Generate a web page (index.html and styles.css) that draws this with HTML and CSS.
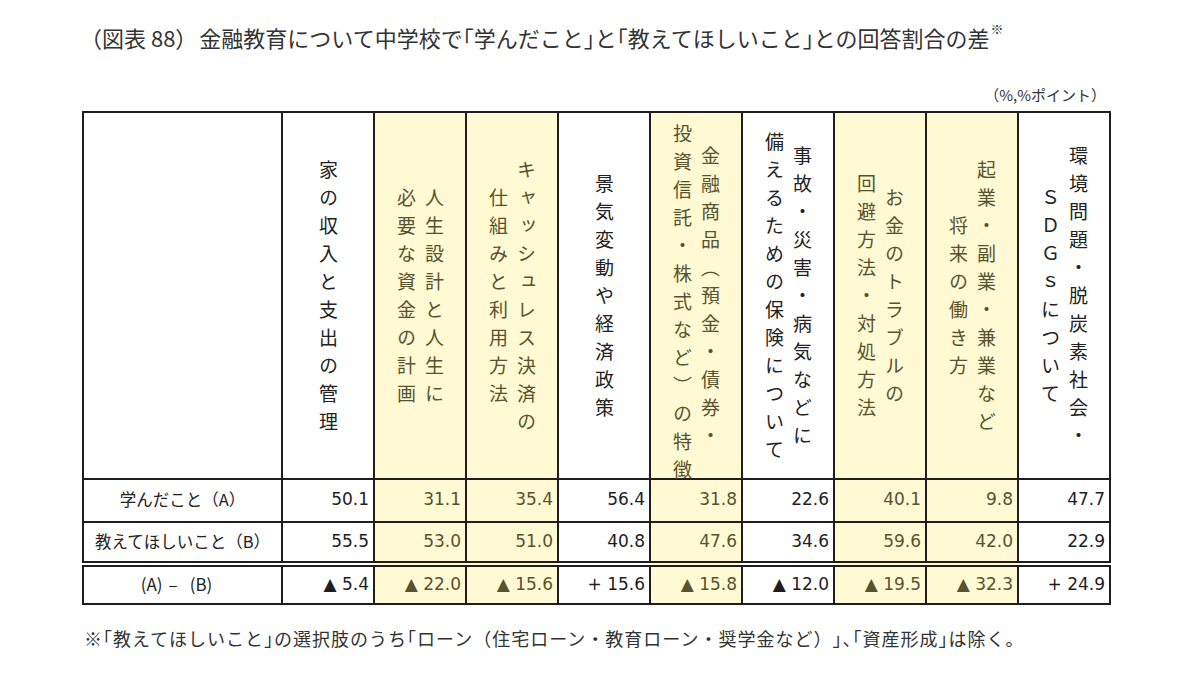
FILE: index.html
```
<!DOCTYPE html>
<html lang="ja">
<head>
<meta charset="utf-8">
<title>図表88</title>
<link rel="stylesheet" href="styles.css">
</head>
<body>
<div class="page">
  <h1 class="title"><span class="fig-no">（図表 88）</span>金融教育について中学校で<span class="hw">「</span>学んだこと<span class="hw">」</span>と<span class="hw">「</span>教えてほしいこと<span class="hw">」</span>との回答割合の差<sup>※</sup></h1>
  <div class="unit">（%,%ポイント）</div>
  <table class="tbl">
    <colgroup>
      <col class="c-label">
      <col class="c-data"><col class="c-data"><col class="c-data"><col class="c-data"><col class="c-data">
      <col class="c-data"><col class="c-data"><col class="c-data"><col class="c-data">
    </colgroup>
    <tr class="r-head">
      <th></th>
      <th><div class="vt">家の収入と支出の管理</div></th>
      <th class="y"><div class="vt">人生設計と人生に<br>必要な資金の計画</div></th>
      <th class="y"><div class="vt">キャッシュレス決済の<br>仕組みと利用方法</div></th>
      <th><div class="vt">景気変動や経済政策</div></th>
      <th class="y"><div class="vt">金融商品（預金・債券・<br>投資信託・株式など）の特徴</div></th>
      <th><div class="vt">事故・災害・病気などに<br>備えるための保険について</div></th>
      <th class="y"><div class="vt">お金のトラブルの<br>回避方法・対処方法</div></th>
      <th class="y"><div class="vt">起業・副業・兼業など<br>将来の働き方</div></th>
      <th><div class="vt">環境問題・脱炭素社会・<br>ＳＤＧｓについて</div></th>
    </tr>
    <tr class="r-a">
      <td class="lbl">学んだこと（A）</td>
      <td class="n">50.1</td><td class="n y">31.1</td><td class="n y">35.4</td><td class="n">56.4</td><td class="n y">31.8</td>
      <td class="n">22.6</td><td class="n y">40.1</td><td class="n y">9.8</td><td class="n">47.7</td>
    </tr>
    <tr class="r-b">
      <td class="lbl">教えてほしいこと（B）</td>
      <td class="n">55.5</td><td class="n y">53.0</td><td class="n y">51.0</td><td class="n">40.8</td><td class="n y">47.6</td>
      <td class="n">34.6</td><td class="n y">59.6</td><td class="n y">42.0</td><td class="n">22.9</td>
    </tr>
    <tr class="r-d">
      <td class="lbl lbl-d">(A)<span class="dash">–</span>(B)</td>
      <td class="n">▲ 5.4</td><td class="n y">▲ 22.0</td><td class="n y">▲ 15.6</td><td class="n">+ 15.6</td><td class="n y">▲ 15.8</td>
      <td class="n">▲ 12.0</td><td class="n y">▲ 19.5</td><td class="n y">▲ 32.3</td><td class="n">+ 24.9</td>
    </tr>
  </table>
  <p class="note">※<span class="hw">「</span>教えてほしいこと<span class="hw">」</span>の選択肢のうち<span class="hw">「</span>ローン（住宅ローン・教育ローン・奨学金など）<span class="hw">」、「</span>資産形成<span class="hw">」</span>は除く。</p>
</div>
</body>
</html>
```
FILE: styles.css
```
* { box-sizing: border-box; }
html, body { margin: 0; padding: 0; background: #fff; }
body {
  font-family: "Noto Sans CJK JP", "Noto Sans", sans-serif;
  color: #222;
  text-spacing-trim: space-all;
}
.page {
  width: 1200px;
  height: 686px;
  padding-top: 22px;
}
.hw { font-feature-settings: "halt"; }
.title {
  margin: 0 0 0 80px;
  font-size: 22px;
  line-height: 30px;
  font-weight: normal;
  letter-spacing: 0;
  color: #333;
  white-space: nowrap;
}
.fig-no { margin-right: 2px; }
.title sup {
  font-size: 13px;
  line-height: 1;
  vertical-align: top;
  margin-left: 1px;
}
.unit {
  width: 1106px;
  margin-top: 33px;
  text-align: right;
  font-size: 15px;
  line-height: 20px;
  color: #333;
}
.tbl {
  margin: 6px 0 0 82px;
  border-collapse: collapse;
  table-layout: fixed;
  width: 1027px;
}
.c-label { width: 199px; }
.c-data { width: 92px; }
.tbl th, .tbl td {
  border: 2px solid #1e1e1e;
  padding: 0;
  font-weight: normal;
}
.tbl .y {
  background: #fffad3;
  color: #58532f;
}
.r-head { height: 367px; }
.r-a { height: 43px; }
.r-b { height: 42px; }
.r-b td { border-bottom: 6px double #1e1e1e; }
.r-d { height: 40px; }
.vt {
  writing-mode: vertical-rl;
  height: 362px;
  margin: 0 auto;
  padding-top: 9px;
  text-align: center;
  font-size: 19px;
  line-height: 28px;
  letter-spacing: 9px;
  white-space: nowrap;
}
.lbl {
  text-align: center;
  font-size: 16.5px;
  padding-bottom: 3px !important;
  color: #222;
}
.lbl-d { padding-right: 12px !important; font-size: 17px; }
.dash { margin: 0 12px 0 6px; }
.n {
  text-align: right;
  padding: 0 4px 3px 0 !important;
  font-family: "DejaVu Sans", "Noto Sans CJK JP", sans-serif;
  font-size: 17px;
  color: #1e1e1e;
}
.note {
  margin: 20px 0 0 84px;
  font-size: 18px;
  line-height: 26px;
  letter-spacing: 1px;
  color: #333;
  white-space: nowrap;
}
```
